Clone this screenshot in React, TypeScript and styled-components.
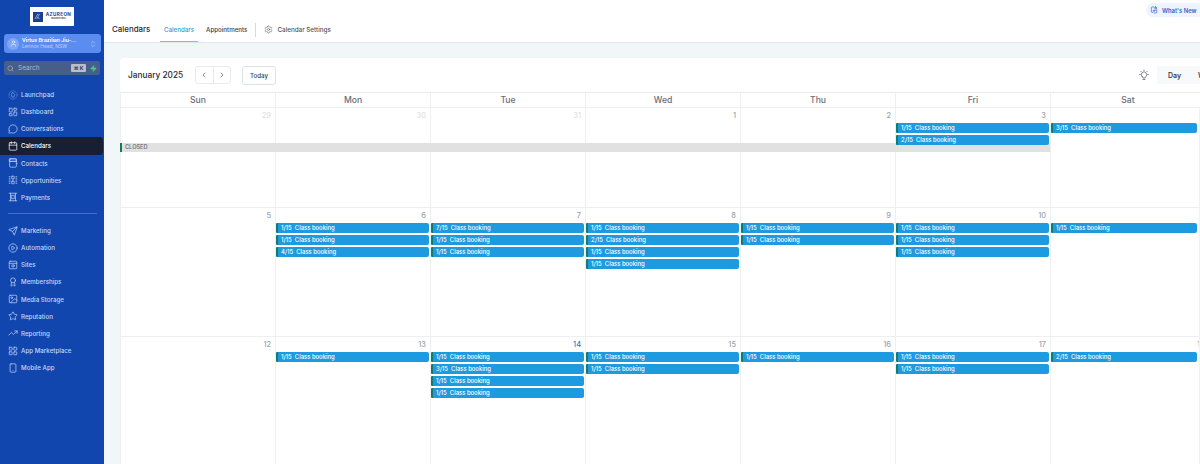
import React from 'react'
import styled, {createGlobalStyle} from 'styled-components'
import {
    Calendar, ChevronLeft, ChevronRight, ChevronsUpDown, CirclePlay, Award, Image,
    LayoutDashboard, LayoutGrid, MessageCircle, Search, Send, Settings,
    Smartphone, Star, TrendingUp, User, Zap
} from 'lucide-react'

const GlobalStyle = createGlobalStyle`
  html, body {
    margin: 0;
    height: 100%;
    overflow: hidden;
    background: #fff;
    font-family: Inter, "Liberation Sans", sans-serif;
  }
`

type IconProps = {size?: number, strokeWidth?: number}

const Glyph = (props: IconProps & {children: React.ReactNode}) =>
    <svg width={props.size} height={props.size} viewBox={'0 0 24 24'} fill={'none'} stroke={'currentColor'}
         strokeWidth={props.strokeWidth} strokeLinecap={'round'} strokeLinejoin={'round'}>
        {props.children}
    </svg>

const LaunchpadIcon = (props: IconProps) => <Glyph {...props}>
    <circle cx={12} cy={12} r={10} stroke={'#4f7ad6'} />
    <path d={'M12 6l4 5-1.5 6h-5L8 11z'} stroke={'#7ea2ea'} />
</Glyph>

const ContactsIcon = (props: IconProps) => <Glyph {...props}>
    <rect x={4} y={2} width={16} height={20} rx={2} />
    <path d={'M4 8h16M4 2h16v6H4zM20 13h2'} />
</Glyph>

const OpportunitiesIcon = (props: IconProps) => <Glyph {...props}>
    <rect x={9} y={3} width={6} height={6} rx={1} />
    <rect x={9} y={15} width={6} height={6} rx={1} />
    <path d={'M3 4h2M3 8h2M3 12h2M3 16h2M3 20h2M19 4h2M19 8h2M19 12h2M19 16h2M19 20h2M12 10v4'} />
</Glyph>

const PaymentsIcon = (props: IconProps) => <Glyph {...props}>
    <path d={'M3 3h18M3 21h18M6 3v18M18 3v18'} />
    <rect x={9} y={8} width={6} height={8} />
</Glyph>

const SitesIcon = (props: IconProps) => <Glyph {...props}>
    <rect x={3} y={3} width={18} height={18} rx={2} />
    <path d={'M3 8h18'} />
    <circle cx={12} cy={14} r={3} />
</Glyph>

const BulbIcon = (props: IconProps) => <Glyph {...props}>
    <path d={'M8.5 15.5a5.5 5.5 0 1 1 7 0c-.7.6-1 1.2-1 2v.5h-5v-.5c0-.8-.3-1.4-1-2z'} />
    <path d={'M10 21h4M12 2v1.5M3 11h1.5M19.5 11H21M5.6 4.6l1 1M18.4 4.6l-1 1'} />
</Glyph>

const NewsIcon = (props: IconProps) => <Glyph {...props}>
    <path d={'M12 3H6a2 2 0 0 0-2 2v12a2 2 0 0 0 2 2h3'} />
    <path d={'M20 11v8a2 2 0 0 1-2 2h-5'} />
    <path d={'M17 2l1.2 2.8L21 6l-2.8 1.2L17 10l-1.2-2.8L13 6l2.8-1.2z'} />
    <circle cx={12} cy={14} r={2.5} />
</Glyph>

const LogoIcon = () => <svg width={7} height={7} viewBox={'0 0 24 24'} fill={'none'} stroke={'#a9c0ec'} strokeWidth={2.5}>
    <path d={'M3 21L13 3l3 6M9 21l5-9 4 9M20 4l-4 5'} />
</svg>

type NavEntry = {label: string, icon: React.ComponentType<IconProps>, active?: boolean}

const topItems: NavEntry[] = [
    {label: 'Launchpad', icon: LaunchpadIcon},
    {label: 'Dashboard', icon: LayoutDashboard},
    {label: 'Conversations', icon: MessageCircle},
    {label: 'Calendars', icon: Calendar, active: true},
    {label: 'Contacts', icon: ContactsIcon},
    {label: 'Opportunities', icon: OpportunitiesIcon},
    {label: 'Payments', icon: PaymentsIcon},
]

const bottomItems: NavEntry[] = [
    {label: 'Marketing', icon: Send},
    {label: 'Automation', icon: CirclePlay},
    {label: 'Sites', icon: SitesIcon},
    {label: 'Memberships', icon: Award},
    {label: 'Media Storage', icon: Image},
    {label: 'Reputation', icon: Star},
    {label: 'Reporting', icon: TrendingUp},
    {label: 'App Marketplace', icon: LayoutGrid},
    {label: 'Mobile App', icon: Smartphone},
]

const dayNames = ['Sun', 'Mon', 'Tue', 'Wed', 'Thu', 'Fri', 'Sat']

type Day = {date: number, faded?: boolean, today?: boolean, events?: string[]}

const weeks: Array<{height: number, closed?: boolean, days: Day[]}> = [
    {
        height: 100,
        closed: true,
        days: [
            {date: 29, faded: true},
            {date: 30, faded: true},
            {date: 31, faded: true},
            {date: 1},
            {date: 2},
            {date: 3, events: ['1/15', '2/15']},
            {date: 4, events: ['3/15']},
        ],
    },
    {
        height: 129,
        days: [
            {date: 5},
            {date: 6, events: ['1/15', '1/15', '4/15']},
            {date: 7, events: ['7/15', '1/15', '1/15']},
            {date: 8, events: ['1/15', '2/15', '1/15', '1/15']},
            {date: 9, events: ['1/15', '1/15']},
            {date: 10, events: ['1/15', '1/15', '1/15']},
            {date: 11, events: ['1/15']},
        ],
    },
    {
        height: 129,
        days: [
            {date: 12},
            {date: 13, events: ['1/15']},
            {date: 14, today: true, events: ['1/15', '3/15', '1/15', '1/15']},
            {date: 15, events: ['1/15', '1/15']},
            {date: 16, events: ['1/15']},
            {date: 17, events: ['1/15', '1/15']},
            {date: 18, events: ['2/15']},
        ],
    },
]

const NavList = (props: {items: NavEntry[]}) => {
    return <Nav>
        {props.items.map(el =>
            <NavItem key={el.label} $active={el.active}>
                <el.icon size={10} strokeWidth={1.7} />
                <span>{el.label}</span>
            </NavItem>
        )}
    </Nav>
}

export default function App() {
    return <Root>
        <GlobalStyle />
        <Sidebar>
            <Logo>
                <LogoMark><LogoIcon /></LogoMark>
                <LogoText>
                    <strong>AZUREON</strong>
                    <span>MARKETING</span>
                </LogoText>
            </Logo>
            <Account>
                <AccountAvatar><User size={7} strokeWidth={2} /></AccountAvatar>
                <AccountText>
                    <strong>Virtus Brazilian Jiu-...</strong>
                    <span>Lennox Head, NSW</span>
                </AccountText>
                <ChevronsUpDown size={8} color={'#bcd2fb'} />
            </Account>
            <SearchRow>
                <SearchBox>
                    <Search size={7} strokeWidth={2} />
                    <span>Search</span>
                    <Kbd>⌘ K</Kbd>
                </SearchBox>
                <Zap size={7} color={'#3fd08b'} fill={'#3fd08b'} />
            </SearchRow>
            <NavList items={topItems} />
            <Divider />
            <NavList items={bottomItems} />
        </Sidebar>
        <Main>
            <TopBar>
                <PageTitle>Calendars</PageTitle>
                <Tab $active>Calendars</Tab>
                <Tab>Appointments</Tab>
                <TabDivider />
                <SettingsLink>
                    <Settings size={9} strokeWidth={1.4} />
                    <span>Calendar Settings</span>
                </SettingsLink>
                <WhatsNew>
                    <NewsIcon size={8} strokeWidth={2} />
                    <span>What's New</span>
                </WhatsNew>
            </TopBar>
            <Content>
                <Card>
                    <Toolbar>
                        <Month>January 2025</Month>
                        <Pager>
                            <PagerButton><ChevronLeft size={8} /></PagerButton>
                            <PagerButton><ChevronRight size={8} /></PagerButton>
                        </Pager>
                        <TodayButton>Today</TodayButton>
                        <BulbWrap><BulbIcon size={12} strokeWidth={1.4} /></BulbWrap>
                        <ViewSwitch>
                            <ViewOption>Day</ViewOption>
                            <ViewOption>Week</ViewOption>
                        </ViewSwitch>
                    </Toolbar>
                    <DayHeader>
                        {dayNames.map(el => <DayName key={el}>{el}</DayName>)}
                    </DayHeader>
                    {weeks.map(week =>
                        <Week key={week.days[0].date} $height={week.height}>
                            {week.closed && <ClosedBar>CLOSED</ClosedBar>}
                            {week.days.map(day =>
                                <Cell key={day.date}>
                                    <DateNumber $faded={day.faded} $today={day.today}>{day.date}</DateNumber>
                                    {day.events?.map((el, i) =>
                                        <EventBar key={i}>{el}&nbsp;&nbsp;Class booking</EventBar>
                                    )}
                                </Cell>
                            )}
                        </Week>
                    )}
                </Card>
            </Content>
        </Main>
    </Root>
}

const Root = styled.div`
  display: flex;
  width: 1200px;
  height: 464px;
  overflow: hidden;
`

const Sidebar = styled.aside`
  flex: 0 0 104px;
  box-sizing: border-box;
  padding-top: 7px;
  background: #1146ae;
  display: flex;
  flex-direction: column;
`

const Logo = styled.div`
  align-self: center;
  width: 44px;
  height: 19px;
  background: #fff;
  display: flex;
  align-items: center;
  justify-content: center;
  gap: 3px;
`

const LogoMark = styled.div`
  width: 10px;
  height: 10px;
  background: #1c3f8f;
  display: flex;
  align-items: center;
  justify-content: center;
`

const LogoText = styled.div`
  display: flex;
  flex-direction: column;
  align-items: center;
  color: #1c3f8f;
  line-height: 1;

  strong {
    font-size: 4.6px;
    letter-spacing: 0.4px;
    font-weight: 700;
  }
  span {
    font-size: 2.4px;
    margin-top: 1px;
    font-weight: 600;
    color: #334;
  }
`

const Account = styled.div`
  margin: 8px 3px 0 4px;
  height: 19px;
  border-radius: 3px;
  background: #5b8cf0;
  display: flex;
  align-items: center;
  padding: 0 4px 0 3px;
  gap: 3px;
  color: #fff;
`

const AccountAvatar = styled.div`
  width: 12px;
  height: 12px;
  border-radius: 50%;
  background: #7ea6f5;
  display: flex;
  align-items: center;
  justify-content: center;
  flex: none;
`

const AccountText = styled.div`
  flex: 1;
  min-width: 0;
  display: flex;
  flex-direction: column;
  gap: 1.5px;
  line-height: 1;
  white-space: nowrap;

  strong {
    font-size: 5.2px;
    font-weight: 600;
  }
  span {
    font-size: 4.9px;
    color: #bcd2fb;
  }
`

const SearchRow = styled.div`
  margin: 8px 4px 0;
  height: 14px;
  border-radius: 2px;
  background: #475e8a;
  display: flex;
  align-items: center;
  padding: 0 3px 0 3px;
  gap: 4px;
`

const SearchBox = styled.div`
  flex: 1;
  display: flex;
  align-items: center;
  gap: 2px;
  color: #aab8d0;
  font-size: 6.5px;

  span {
    flex: 1;
    padding-left: 2px;
  }
`

const Kbd = styled.div`
  width: 15px;
  height: 8px;
  background: #b7bfcc;
  color: #2d3a50;
  font-size: 5px;
  line-height: 8px;
  text-align: center;
  font-weight: 700;
  border-radius: 1px;
`

const Nav = styled.nav`
  display: flex;
  flex-direction: column;
  margin-top: 11px;

  & + div + & {
    margin-top: 8px;
  }
`

const NavItem = styled.div<{$active?: boolean}>`
  height: 17.15px;
  box-sizing: border-box;
  margin-right: 1px;
  padding-left: 8px;
  display: flex;
  align-items: center;
  gap: 3px;
  font-size: 6.2px;
  font-weight: 500;
  color: ${p => p.$active ? '#fff' : '#c4d6fb'};
  background: ${p => p.$active ? '#171f35' : 'transparent'};
  border-radius: ${p => p.$active ? '0 3px 3px 0' : '0'};
`

const Divider = styled.div`
  margin: 7px 7px 0 8px;
  height: 1px;
  background: #3f6fd0;
`

const Main = styled.main`
  flex: 1;
  min-width: 0;
  display: flex;
  flex-direction: column;
  overflow: hidden;
`

const TopBar = styled.header`
  position: relative;
  height: 43px;
  box-sizing: border-box;
  flex: none;
  padding: 17px 0 0 8px;
  background: #fff;
  border-bottom: 1px solid #dfe6ea;
  display: flex;
  align-items: stretch;
`

const PageTitle = styled.div`
  font-size: 7.9px;
  font-weight: 500;
  color: #1f2937;
  line-height: 25px;
  width: 40px;
  flex: none;
  margin-right: 8px;
  height: 25px;
`

const Tab = styled.div<{$active?: boolean}>`
  font-size: 6.2px;
  font-weight: 500;
  color: ${p => p.$active ? '#2f9bdc' : '#374151'};
  padding: 0 4px;
  line-height: 26px;
  height: 25px;
  box-sizing: border-box;
  border-bottom: 1px solid ${p => p.$active ? '#7cc2ec' : 'transparent'};

  & + & {
    margin-left: 4px;
  }
`

const TabDivider = styled.div`
  width: 1px;
  height: 14px;
  margin: 6px 8px 0 4px;
  background: #d5dadf;
`

const SettingsLink = styled.div`
  display: flex;
  align-items: center;
  gap: 4px;
  height: 25px;
  font-size: 6.3px;
  font-weight: 500;
  color: #4b5563;
`

const WhatsNew = styled.div`
  position: absolute;
  top: 3px;
  left: 1042px;
  width: 70px;
  height: 14px;
  box-sizing: border-box;
  padding-left: 4px;
  border-radius: 7px;
  background: #eef4fd;
  color: #2b63cf;
  font-size: 5.9px;
  font-weight: 600;
  display: flex;
  align-items: center;
  gap: 4px;
`

const Content = styled.div`
  flex: 1;
  min-height: 0;
  background: #f1f6f9;
  padding: 15px 0 0 16px;
  overflow: hidden;
`

const Card = styled.section`
  width: 1085px;
  background: #fff;
  border-radius: 4px 0 0 0;
`

const Toolbar = styled.div`
  height: 34px;
  box-sizing: border-box;
  padding: 8px 0 0 8px;
  display: flex;
  align-items: flex-start;
`

const Month = styled.div`
  flex: none;
  width: 67px;
  font-size: 8.3px;
  font-weight: 500;
  color: #1f2937;
  line-height: 18px;
`

const Pager = styled.div`
  flex: none;
  width: 36px;
  height: 18px;
  box-sizing: border-box;
  border: 1px solid #e8ebee;
  border-radius: 3px;
  display: flex;
  margin-right: 11px;
`

const PagerButton = styled.div`
  flex: 1;
  color: #4b5563;
  display: flex;
  align-items: center;
  justify-content: center;

  & + & {
    border-left: 1px solid #e8ebee;
  }
`

const TodayButton = styled.div`
  flex: none;
  width: 34px;
  height: 19px;
  box-sizing: border-box;
  border: 1px solid #dfe3e7;
  border-radius: 3px;
  font-size: 6.2px;
  font-weight: 500;
  color: #374151;
  display: flex;
  align-items: center;
  justify-content: center;
`

const BulbWrap = styled.div`
  flex: none;
  margin-left: auto;
  margin-right: 7px;
  color: #4b5563;
  height: 18px;
  display: flex;
  align-items: center;
`

const ViewSwitch = styled.div`
  flex: none;
  width: 48px;
  height: 18px;
  padding-left: 11px;
  box-sizing: border-box;
  background: #f8f9fa;
  display: flex;
  align-items: center;
`

const ViewOption = styled.div`
  flex: none;
  width: 30px;
  font-size: 7px;
  font-weight: 600;
  color: #374151;
`

const DayHeader = styled.div`
  display: grid;
  grid-template-columns: repeat(7, 155px);
  height: 15px;
  border-top: 1px solid #e9ecef;
  box-sizing: border-box;
`

const DayName = styled.div`
  border-left: 1px solid #eeeff1;
  font-size: 8.6px;
  font-weight: 500;
  color: #666d78;
  line-height: 15px;
  text-align: center;
`

const Week = styled.div<{$height: number}>`
  position: relative;
  display: grid;
  grid-template-columns: repeat(6, 155px) 159px;
  height: ${p => p.$height}px;
  box-sizing: border-box;
  border-top: 1px solid #eeeff1;

  /* faint edge of the Saturday column, the date runs past it */
  &::after {
    content: '';
    position: absolute;
    left: 1079px;
    top: 0;
    bottom: 0;
    width: 1px;
    background: #f0f1f3;
  }
`

const Cell = styled.div`
  border-left: 1px solid #eeeff1;
  display: flex;
  flex-direction: column;
  gap: 2px;
  padding-right: 1px;

  &:last-child > div + div {
    margin-right: 11px;
  }
`

const DateNumber = styled.div<{$faded?: boolean, $today?: boolean}>`
  height: 15px;
  line-height: 16px;
  padding-right: 3px;
  text-align: right;
  font-size: 7.4px;
  font-weight: 500;
  color: ${p => p.$today ? '#3b6fd1' : p.$faded ? '#dfe1e4' : '#9ca3ab'};
  margin-bottom: -2px;
`

const EventBar = styled.div`
  position: relative;
  z-index: 2;
  height: 10px;
  box-sizing: border-box;
  padding-left: 3px;
  background: #1d9ae0;
  border-left: 2px solid #137a6e;
  border-radius: 1px 2px 2px 1px;
  color: #fff;
  font-size: 5.9px;
  font-weight: 500;
  line-height: 10px;
  white-space: nowrap;
`

const ClosedBar = styled.div`
  position: absolute;
  z-index: 1;
  left: 0;
  top: 35px;
  width: 930px;
  height: 9px;
  box-sizing: border-box;
  padding-left: 3px;
  background: #e1e1e1;
  border-left: 2px solid #137a5a;
  color: #77797d;
  font-size: 5.6px;
  font-weight: 600;
  line-height: 9px;
`
